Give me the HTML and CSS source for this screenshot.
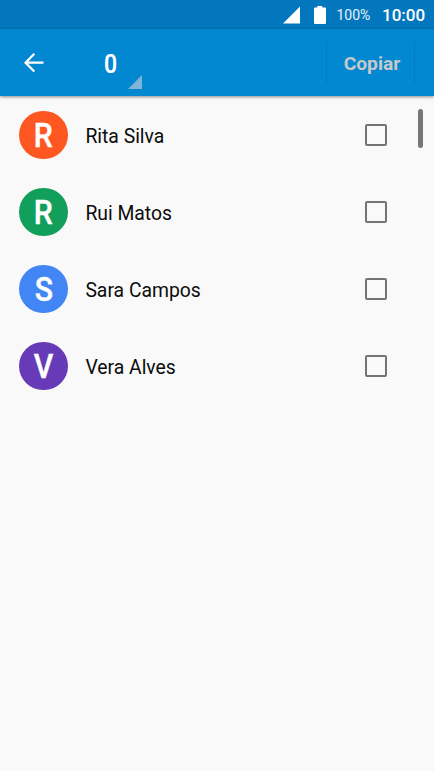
FILE: index.html
```html
<!DOCTYPE html>
<html lang="pt">
<head>
<meta charset="utf-8">
<title>Copiar contactos</title>
<link rel="stylesheet" href="styles.css">
</head>
<body>
<div class="status">
  <svg class="signal" width="18" height="18" viewBox="0 0 18 18"><path d="M0 17.500 17 .5v17z" fill="#fff"/></svg>
  <svg class="battery" width="12" height="18" viewBox="0 0 12 18"><path d="M3.300 0h5v1.500H11q1 0 1 1V17q0 1-1 1H1q-1 0-1-1V2.500q0-1 1-1h2.300z" fill="#fff"/></svg>
  <span class="percent">100%</span>
  <span class="clock">10:00</span>
</div>
<header class="bar">
  <svg class="back" width="20" height="20" viewBox="0 0 20 20"><path d="M10.300.8 1.600 9.700l8.700 8.800M1.800 9.700h17.700" fill="none" stroke="#fff" stroke-width="2.300"/></svg>
  <div class="selector"><span class="count">0</span><svg class="corner" width="14" height="14" viewBox="0 0 14 14"><path d="M14 0v14H0z" fill="#7fb4d6"/></svg></div>
  <div class="action">Copiar</div>
</header>
<main class="list">
  <div class="row"><span class="avatar orange"><span class="initial">R</span></span><span class="name">Rita Silva</span><span class="check"></span></div>
  <div class="row"><span class="avatar green"><span class="initial">R</span></span><span class="name">Rui Matos</span><span class="check"></span></div>
  <div class="row"><span class="avatar blue"><span class="initial">S</span></span><span class="name">Sara Campos</span><span class="check"></span></div>
  <div class="row"><span class="avatar purple"><span class="initial">V</span></span><span class="name">Vera Alves</span><span class="check"></span></div>
  <div class="scrollbar"></div>
</main>
</body>
</html>
```
FILE: styles.css
```css
* { box-sizing: border-box; }
body {
  margin: 0;
  height: 771px;
  overflow: hidden;
  background: #f9f9f9;
  font-family: Roboto, "Liberation Sans", sans-serif;
  display: flex;
  flex-direction: column;
}
svg { display: block; flex: none; }
.status {
  height: 29px;
  flex: none;
  background: #0277bd;
  color: #fff;
  display: flex;
  align-items: center;
  justify-content: flex-end;
  padding-right: 10px;
  line-height: 29px;
}
.signal { margin-right: 13.5px; }
.battery { margin-right: 10.5px; }
.percent { width: 45.5px; font-size: 14px; color: #e6f1f8; padding-top: 1px; }
.clock { width: 42px; font-size: 17px; font-weight: 500; white-space: nowrap; padding-top: 1px; }
.bar {
  height: 67px;
  flex: none;
  background: #0288d1;
  display: flex;
  align-items: center;
  padding: 0 19px 0 24px;
  color: #fff;
  box-shadow: 0 1px 3px rgba(0, 0, 0, .45);
  z-index: 1;
}
.selector {
  margin-left: 60px;
  width: 38px;
  height: 67px;
  display: flex;
  align-items: flex-end;
  justify-content: space-between;
  padding-bottom: 7px;
}
.count {
  font-size: 25px;
  font-weight: 500;
  line-height: 56px;
  height: 53px;
  transform: translate(-.6px, .7px) scaleX(.92);
  -webkit-text-stroke: .2px #fff;
}
.action {
  margin-left: auto;
  width: 89px;
  height: 43px;
  padding-left: 3px;
  border-left: 1px solid #047bc0;
  border-right: 1px solid #047bc0;
  font-size: 19.2px;
  font-weight: 700;
  line-height: 46px;
  text-align: center;
  color: #c8c8c8;
}
.list { position: relative; flex: 1; }
.row {
  height: 77px;
  display: flex;
  align-items: center;
  padding: 1px 47px 0 19.2px;
}
.avatar {
  width: 48.4px;
  height: 48.4px;
  border-radius: 50%;
  display: flex;
  align-items: center;
  justify-content: center;
  color: #fff;
  font-size: 32.5px;
  font-weight: 500;
  line-height: 48px;
}
.initial {
  transform: translateY(.6px) scaleX(.93);
  -webkit-text-stroke: .4px #fff;
}
.orange { background: #ff5722; }
.green { background: #129e5b; }
.blue { background: #4285f4; }
.purple { background: #673ab7; }
.name {
  margin-left: 17.8px;
  padding-top: 2px;
  font-size: 19.35px;
  line-height: 24px;
  color: #0c0c0c;
  transform: translateY(.5px);
}
.check {
  margin: 0 0 1px auto;
  width: 22px;
  height: 22px;
  border: 2px solid #747474;
  border-radius: 2px;
}
.scrollbar {
  position: absolute;
  left: 418px;
  top: 13px;
  width: 5px;
  height: 39px;
  border-radius: 2.5px;
  background: #777;
}
```
